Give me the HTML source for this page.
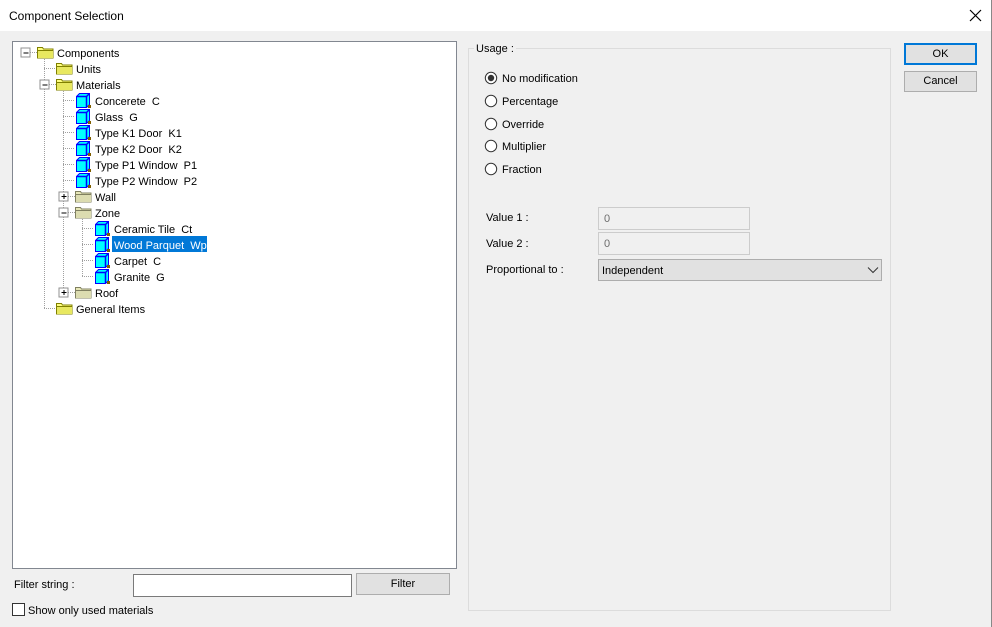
<!DOCTYPE html>
<html><head><meta charset="utf-8"><style>
*{margin:0;padding:0;box-sizing:border-box}
body{width:992px;height:627px;background:#f0f0f0;position:relative;overflow:hidden;font-family:"Liberation Sans",Tahoma,sans-serif;font-size:11px;color:#000}
.a{position:absolute}
.title{left:0;top:0;width:992px;height:31px;background:#fff}
.btn{position:absolute;background:#e1e1e1;border:1px solid #adadad;text-align:center;font-size:11px}
.lbl{position:absolute;white-space:nowrap}
</style></head><body>
<div class="a title"></div>
<div class="lbl" style="left:9px;top:9px;font-size:12px">Component Selection</div>
<svg class="a" style="left:968px;top:8px" width="16" height="16"><path d="M2 2L13 13M13 2L2 13" stroke="#000" stroke-width="1.2"/></svg>
<div class="a" style="left:991px;top:0;width:1px;height:627px;background:#888"></div>

<div class="a" style="left:12px;top:41px;width:445px;height:528px;background:#fff;border:1px solid #828790"></div>
<svg class="a" style="left:0;top:0" width="470" height="330" font-family="Liberation Sans,sans-serif" font-size="11">
<defs>
<g id="fo"><path d="M0.5 2.5h5l1 1.5h9.5v9h-15.5z" fill="#ffff80" stroke="#808000"/><rect x="1" y="5" width="15" height="8" fill="#e8e860"/><path d="M0.5 5.5h16" stroke="#808000"/></g>
<g id="fg"><path d="M0.5 2.5h5l1 1.5h9.5v9h-15.5z" fill="#e8e8b8" stroke="#808060"/><rect x="1" y="5" width="15" height="8" fill="#dcdcb0"/><path d="M0.5 5.5h16" stroke="#808060"/></g>
<g id="cu"><path d="M1.5 4.5l3-3h10v11l-3 3h-10z" fill="#00ffff" stroke="#0000ff"/><path d="M1.5 4.5h10v11M11.5 4.5l3-3" fill="none" stroke="#0000ff" stroke-width="1.5"/><rect x="13" y="13" width="3" height="3" fill="#806000"/></g>
<g id="pl"><rect x="-4.5" y="-4.5" width="9" height="9" fill="#fff" stroke="#919191"/><path d="M-2 0h5M0.5 -2.5v5" stroke="#000"/></g>
<g id="mi"><rect x="-4.5" y="-4.5" width="9" height="9" fill="#fff" stroke="#919191"/><path d="M-2 0.5h5" stroke="#000"/></g>
</defs>
<g stroke="#a0a0a0" stroke-dasharray="1 1" fill="none">
<path d="M44.5 57v251"/>
<path d="M63.5 89v203"/>
<path d="M82.5 217v59"/>
<path d="M30 52.5h7M44 68.5h12M49 84.5h7M44 308.5h12"/>
<path d="M63 100.5h12M63 116.5h12M63 132.5h12M63 148.5h12M63 164.5h12M63 180.5h12"/>
<path d="M68 196.5h7M68 212.5h7M68 292.5h7"/>
<path d="M82 228.5h12M82 244.5h12M82 260.5h12M82 276.5h12"/>
</g>
<use href="#mi" x="25.5" y="52.5"/><use href="#mi" x="44.5" y="84.5"/>
<use href="#pl" x="63.5" y="196.5"/><use href="#mi" x="63.5" y="212.5"/><use href="#pl" x="63.5" y="292.5"/>
<use href="#fo" x="37" y="45"/><use href="#fo" x="56" y="61"/><use href="#fo" x="56" y="77"/>
<use href="#fg" x="75" y="189"/><use href="#fg" x="75" y="205"/><use href="#fg" x="75" y="285"/><use href="#fo" x="56" y="301"/>
<use href="#cu" x="75" y="92"/><use href="#cu" x="75" y="108"/><use href="#cu" x="75" y="124"/><use href="#cu" x="75" y="140"/><use href="#cu" x="75" y="156"/><use href="#cu" x="75" y="172"/>
<use href="#cu" x="94" y="220"/><use href="#cu" x="94" y="236"/><use href="#cu" x="94" y="252"/><use href="#cu" x="94" y="268"/>
<rect x="112" y="236" width="95" height="16" fill="#0078d7"/>
<g>
<text x="57" y="57">Components</text>
<text x="76" y="73">Units</text>
<text x="76" y="89">Materials</text>
<text x="95" y="105" xml:space="preserve">Concerete  C</text>
<text x="95" y="121" xml:space="preserve">Glass  G</text>
<text x="95" y="137" xml:space="preserve">Type K1 Door  K1</text>
<text x="95" y="153" xml:space="preserve">Type K2 Door  K2</text>
<text x="95" y="169" xml:space="preserve">Type P1 Window  P1</text>
<text x="95" y="185" xml:space="preserve">Type P2 Window  P2</text>
<text x="95" y="201">Wall</text>
<text x="95" y="217">Zone</text>
<text x="114" y="233" xml:space="preserve">Ceramic Tile  Ct</text>
<text x="114" y="249" fill="#fff" xml:space="preserve">Wood Parquet  Wp</text>
<text x="114" y="265" xml:space="preserve">Carpet  C</text>
<text x="114" y="281" xml:space="preserve">Granite  G</text>
<text x="95" y="297">Roof</text>
<text x="76" y="313">General Items</text>
</g>
</svg>

<div class="lbl" style="left:14px;top:579px">Filter string :</div>
<div class="a" style="left:133px;top:574px;width:219px;height:23px;background:#fff;border:1px solid #7a7a7a"></div>
<div class="btn" style="left:356px;top:573px;width:94px;height:22px;line-height:20px">Filter</div>
<div class="a" style="left:12px;top:603px;width:13px;height:13px;background:#fff;border:1px solid #333"></div>
<div class="lbl" style="left:28px;top:605px">Show only used materials</div>

<div class="a" style="left:468px;top:48px;width:423px;height:563px;border:1px solid #dcdcdc"></div>
<div class="lbl" style="left:474px;top:43px;background:#f0f0f0;padding:0 2px">Usage :</div>
<svg class="a" style="left:484px;top:70px" width="16" height="110">
<g fill="#fff" stroke="#333"><circle cx="7" cy="8" r="5.7"/><circle cx="7" cy="31" r="5.7"/><circle cx="7" cy="54" r="5.7"/><circle cx="7" cy="76" r="5.7"/><circle cx="7" cy="99" r="5.7"/></g>
<circle cx="7" cy="8" r="3.2" fill="#333"/>
</svg>
<div class="lbl" style="left:502px;top:73px">No modification</div>
<div class="lbl" style="left:502px;top:96px">Percentage</div>
<div class="lbl" style="left:502px;top:119px">Override</div>
<div class="lbl" style="left:502px;top:141px">Multiplier</div>
<div class="lbl" style="left:502px;top:164px">Fraction</div>

<div class="lbl" style="left:486px;top:212px">Value 1 :</div>
<div class="a" style="left:598px;top:207px;width:152px;height:23px;border:1px solid #ccc;color:#6d6d6d;padding:5px 5px">0</div>
<div class="lbl" style="left:486px;top:238px">Value 2 :</div>
<div class="a" style="left:598px;top:232px;width:152px;height:23px;border:1px solid #ccc;color:#6d6d6d;padding:5px 5px">0</div>
<div class="lbl" style="left:486px;top:264px">Proportional to :</div>
<div class="a" style="left:598px;top:259px;width:284px;height:22px;background:#e1e1e1;border:1px solid #adadad;padding:5px 3px">Independent</div>
<svg class="a" style="left:867px;top:265px" width="12" height="10"><path d="M1 2.5l5 5 5-5" fill="none" stroke="#333"/></svg>

<div class="btn" style="left:904px;top:43px;width:73px;height:22px;line-height:18px;border:2px solid #0078d7">OK</div>
<div class="btn" style="left:904px;top:71px;width:73px;height:21px;line-height:19px">Cancel</div>
</body></html>
